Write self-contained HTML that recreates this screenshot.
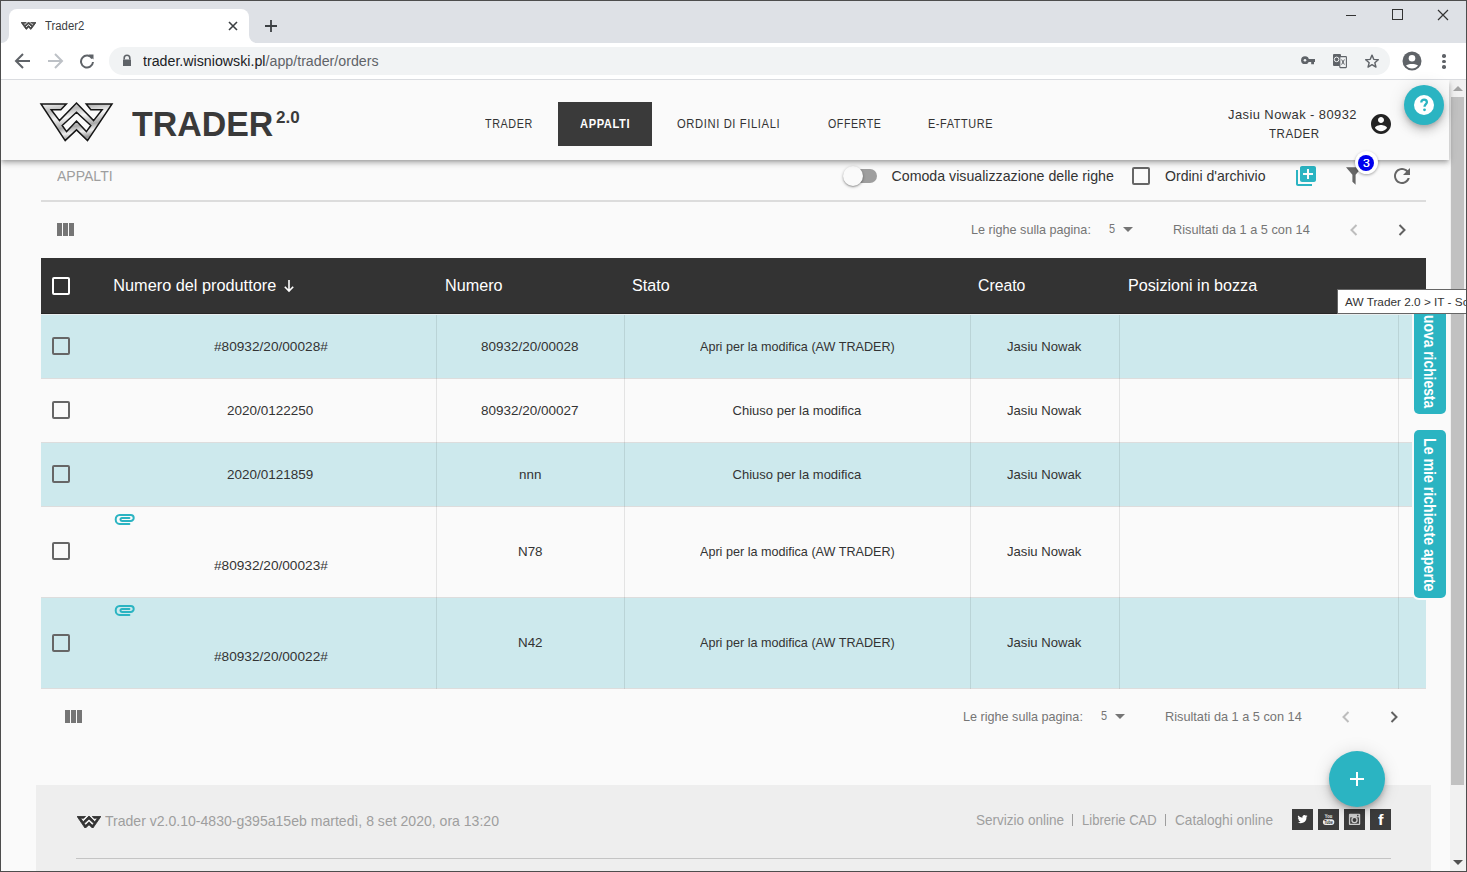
<!DOCTYPE html>
<html><head><meta charset="utf-8">
<style>
*{box-sizing:border-box;margin:0;padding:0}
html,body{width:1467px;height:872px;overflow:hidden;background:#fafafa;font-family:"Liberation Sans",sans-serif;color:#333}
.a{position:absolute}
.t{position:absolute;white-space:nowrap;line-height:1;transform-origin:0 0}
</style></head><body>
<div class="a" style="left:0px;top:0px;width:1467px;height:43px;background:#dee1e6"></div>
<div class="a" style="left:0px;top:43px;width:1467px;height:36px;background:#fff"></div>
<div class="a" style="left:0px;top:79px;width:1467px;height:1px;background:#dadce0"></div>
<div class="a" style="left:9px;top:9px;width:240px;height:35px;background:#fff;border-radius:8px 8px 0 0"></div>
<div class="a" style="left:1px;top:35px;width:8px;height:8px;background:#fff"></div>
<div class="a" style="left:1px;top:27px;width:8px;height:16px;background:#dee1e6;border-radius:0 0 8px 0"></div>
<div class="a" style="left:249px;top:35px;width:8px;height:8px;background:#fff"></div>
<div class="a" style="left:249px;top:27px;width:8px;height:16px;background:#dee1e6;border-radius:0 0 0 8px"></div>
<svg class="a" style="left:21.3px;top:22.2px" width="15.2" height="7.4" viewBox="3 5 71 37.6" preserveAspectRatio="none"><path d="M3 6L28.3 6L22.8 11.8L13.2 11.8L21.5 22.6L38.5 5L55.6 22.6L64.1 11.8L52.8 11.8L48.2 6L74 6L49.5 42.6L38.5 31.9L27.2 42.6Z M38.5 14.3L24.2 27.5L28.6 33.6L38.5 23.1L48.4 33.6L52.8 27.5Z" fill="#444" stroke="#444" stroke-width="4" fill-rule="evenodd"/></svg>
<div class="t" style="left:44.90px;top:20px;font-size:12.5px;color:#3c4043;transform:scaleX(0.9076);">Trader2</div>
<svg class="a" style="left:228px;top:21px" width="10" height="10" viewBox="0 0 10 10"><path d="M1 1L9 9M9 1L1 9" stroke="#3c4043" stroke-width="1.6"/></svg>
<svg class="a" style="left:264px;top:19px" width="14" height="14" viewBox="0 0 14 14"><path d="M7 1V13M1 7H13" stroke="#3c4043" stroke-width="1.8"/></svg>
<div class="a" style="left:1346px;top:15px;width:10px;height:1px;background:#333"></div>
<div class="a" style="left:1392px;top:9px;width:11px;height:11px;border:1px solid #333"></div>
<svg class="a" style="left:1437px;top:9px" width="12" height="12" viewBox="0 0 12 12"><path d="M1 1L11 11M11 1L1 11" stroke="#333" stroke-width="1.2"/></svg>
<svg class="a" style="left:14px;top:52px" width="18" height="18" viewBox="0 0 18 18"><path d="M16 9H3M9 2L2 9L9 16" fill="none" stroke="#5f6368" stroke-width="2"/></svg>
<svg class="a" style="left:46px;top:52px" width="18" height="18" viewBox="0 0 18 18"><path d="M2 9H15M9 2L16 9L9 16" fill="none" stroke="#bdc1c6" stroke-width="2"/></svg>
<svg class="a" style="left:79px;top:53px" width="16" height="16" viewBox="0 0 16 16"><path d="M13.2 5.5A6 6 0 1 0 14 9" fill="none" stroke="#5f6368" stroke-width="2"/><path d="M9.5 1.5H14.5V6.5Z" fill="#5f6368"/></svg>
<div class="a" style="left:109px;top:47px;width:1281px;height:28px;background:#f1f3f4;border-radius:14px"></div>
<svg class="a" style="left:121px;top:54px" width="12" height="13" viewBox="0 0 12 13"><path d="M3.2 5.5V4A2.8 2.8 0 0 1 8.8 4V5.5" fill="none" stroke="#5f6368" stroke-width="1.6"/><rect x="2" y="5.5" width="8" height="6.5" fill="#5f6368"/></svg>
<div class="t" style="left:143.40px;top:54px;font-size:14px;color:#202124;transform:scaleX(1.0160);">trader.wisniowski.pl<span style="color:#5f6368">/app/trader/orders</span></div>
<svg class="a" style="left:1300px;top:55px" width="16" height="10" viewBox="0 0 16 10"><circle cx="5" cy="5.2" r="3.9" fill="#5f6368"/><circle cx="5" cy="5.2" r="1.3" fill="#f1f3f4"/><path d="M7 4H15V6.9H14V9.2H11.2V6.9H7Z" fill="#5f6368"/></svg>
<svg class="a" style="left:1332px;top:53px" width="16" height="16" viewBox="0 0 16 16"><rect x="1" y="1" width="8" height="12" rx="1" fill="#5f6368"/><rect x="7.8" y="3.6" width="6.6" height="11" rx=".6" fill="#f1f3f4" stroke="#5f6368" stroke-width="1.1"/><circle cx="4.6" cy="6.4" r="2.3" fill="none" stroke="#f1f3f4" stroke-width="1"/><path d="M9.6 6.5L12.4 11.6M12.4 6.5L9.6 11.6" stroke="#5f6368" stroke-width="1"/></svg>
<svg class="a" style="left:1365px;top:54px" width="14" height="14" viewBox="0 0 16 16"><path d="M8 1.3L10 6.1L15.2 6.5L11.2 9.9L12.5 14.9L8 12.2L3.5 14.9L4.8 9.9L0.8 6.5L6 6.1Z" fill="none" stroke="#5f6368" stroke-width="1.6" stroke-linejoin="round"/></svg>
<svg class="a" style="left:1402px;top:51px" width="20" height="20" viewBox="0 0 20 20"><circle cx="10" cy="10" r="9.5" fill="#5f6368"/><circle cx="10" cy="7.3" r="3.3" fill="#fff"/><path d="M4 14.6C5.5 12.4 14.5 12.4 16 14.6C14.5 16.6 12.5 17.4 10 17.4C7.5 17.4 5.5 16.6 4 14.6Z" fill="#fff"/></svg>
<div class="a" style="left:1442.3px;top:54.2px;width:3.5px;height:3.5px;border-radius:50%;background:#5f6368"></div>
<div class="a" style="left:1442.3px;top:59.7px;width:3.5px;height:3.5px;border-radius:50%;background:#5f6368"></div>
<div class="a" style="left:1442.3px;top:65.2px;width:3.5px;height:3.5px;border-radius:50%;background:#5f6368"></div>
<div class="a" style="left:0;top:80px;width:1467px;height:120px;overflow:hidden;z-index:2"><div class="a" style="left:1px;top:0px;width:1448px;height:80px;background:#fafafa;box-shadow:0 2px 4px -1px rgba(0,0,0,.25),0 4px 5px 0 rgba(0,0,0,.14),0 1px 10px 0 rgba(0,0,0,.08)"></div></div>
<div class="a" style="left:0;top:0;width:1467px;height:872px;z-index:3;pointer-events:none"><svg class="a" style="left:38px;top:98px" width="78" height="48" viewBox="0 0 78 48">
<defs><linearGradient id="sg" x1="0" y1="0" x2="0.3" y2="1"><stop offset="0" stop-color="#f8f8f8"/><stop offset=".25" stop-color="#b8b8b8"/><stop offset=".45" stop-color="#f6f6f6"/><stop offset=".7" stop-color="#a8a8a8"/><stop offset=".85" stop-color="#eee"/><stop offset="1" stop-color="#999"/></linearGradient></defs>
<path d="M3 6L28.3 6L22.8 11.8L13.2 11.8L21.5 22.6L38.5 5L55.6 22.6L64.1 11.8L52.8 11.8L48.2 6L74 6L49.5 42.6L38.5 31.9L27.2 42.6Z M38.5 14.3L24.2 27.5L28.6 33.6L38.5 23.1L48.4 33.6L52.8 27.5Z" fill="url(#sg)" fill-rule="evenodd" stroke="#151515" stroke-width="1.5" stroke-linejoin="miter"/>
</svg>
<div class="t" style="left:132.20px;top:107px;font-size:35.7px;font-weight:bold;color:#3a3a3a;transform:scaleX(0.9498);">TRADER</div>
<div class="t" style="left:276.30px;top:109px;font-size:16.3px;font-weight:bold;color:#3a3a3a;transform:scaleX(1.0460);">2.0</div>
<div class="a" style="left:558px;top:102px;width:94px;height:44px;background:#3a3a3a"></div>
<div class="t" style="left:485.30px;top:117px;font-size:13px;color:#333;transform:scaleX(0.8289);letter-spacing:0.7px;">TRADER</div>
<div class="t" style="left:580.20px;top:117px;font-size:13px;font-weight:bold;color:#fff;transform:scaleX(0.8553);letter-spacing:0.7px;">APPALTI</div>
<div class="t" style="left:677.40px;top:117px;font-size:13px;color:#333;transform:scaleX(0.8634);letter-spacing:0.7px;">ORDINI DI FILIALI</div>
<div class="t" style="left:827.60px;top:117px;font-size:13px;color:#333;transform:scaleX(0.8170);letter-spacing:0.7px;">OFFERTE</div>
<div class="t" style="left:928.40px;top:117px;font-size:13px;color:#333;transform:scaleX(0.8378);letter-spacing:0.7px;">E-FATTURE</div>
<div class="t" style="left:1228.10px;top:108px;font-size:13.3px;color:#333;transform:scaleX(0.9713);letter-spacing:0.45px;">Jasiu Nowak - 80932</div>
<div class="t" style="left:1269.00px;top:127px;font-size:13px;color:#333;transform:scaleX(0.8894);letter-spacing:0.6px;">TRADER</div>
<svg class="a" style="left:1369px;top:112px" width="24" height="24" viewBox="0 0 24 24"><path fill="#222" d="M12 2C6.48 2 2 6.48 2 12s4.48 10 10 10 10-4.48 10-10S17.52 2 12 2zm0 3c1.66 0 3 1.34 3 3s-1.34 3-3 3-3-1.34-3-3 1.34-3 3-3zm0 14.2c-2.5 0-4.71-1.28-6-3.22.03-1.99 4-3.08 6-3.08 1.99 0 5.97 1.09 6 3.08-1.29 1.94-3.5 3.22-6 3.22z"/></svg></div>
<div class="a" style="left:1404px;top:85px;width:40px;height:40px;border-radius:50%;background:#2bb4c2;box-shadow:0 3px 5px -1px rgba(0,0,0,.2),0 6px 10px 0 rgba(0,0,0,.14),0 1px 18px 0 rgba(0,0,0,.12);z-index:4"></div>
<svg class="a" style="left:1412px;top:93px;z-index:5" width="24" height="24" viewBox="0 0 24 24"><circle cx="12" cy="12" r="10" fill="#fff"/><path d="M9.3 9.4C9.3 7.7 10.5 6.6 12.1 6.6S14.9 7.7 14.9 9.3C14.9 11.1 12.5 11.3 12.5 13.7" fill="none" stroke="#2bb4c2" stroke-width="2.3"/><circle cx="12.5" cy="16.8" r="1.4" fill="#2bb4c2"/></svg>
<div class="t" style="left:57.30px;top:169px;font-size:14.3px;color:#9e9e9e;transform:scaleX(0.9809);">APPALTI</div>
<div class="a" style="left:41px;top:200px;width:1385px;height:2px;background:#dcdcdc"></div>
<div class="a" style="left:849px;top:169px;width:28px;height:14px;border-radius:7px;background:#9e9e9e"></div>
<div class="a" style="left:843px;top:166px;width:20px;height:20px;border-radius:50%;background:#fafafa;box-shadow:0 1px 3px rgba(0,0,0,.35),0 1px 1px rgba(0,0,0,.14)"></div>
<div class="t" style="left:891.50px;top:169px;font-size:14.2px;color:#333;">Comoda visualizzazione delle righe</div>
<div class="a" style="left:1132px;top:167px;width:18px;height:18px;border:2px solid #666;border-radius:2px"></div>
<div class="t" style="left:1164.80px;top:169px;font-size:14.2px;color:#333;transform:scaleX(0.9925);">Ordini d'archivio</div>
<svg class="a" style="left:1294px;top:164px" width="24" height="24" viewBox="0 0 24 24"><path fill="#2bb4c2" d="M4 6H2v14c0 1.1.9 2 2 2h14v-2H4V6zm16-4H8c-1.1 0-2 .9-2 2v12c0 1.1.9 2 2 2h12c1.1 0 2-.9 2-2V4c0-1.1-.9-2-2-2zm-1 9h-4v4h-2v-4H9V9h4V5h2v4h4v2z"/></svg>
<svg class="a" style="left:1344px;top:166px" width="20" height="20" viewBox="0 0 20 20"><path fill="#666" d="M2 1.3H18L11.6 8.8V18.8L8.4 15.8V8.8Z"/></svg>
<div class="a" style="left:1354.5px;top:151px;width:23px;height:23px;border-radius:50%;background:#fff;box-shadow:0 1px 3px rgba(0,0,0,.35);z-index:3"></div>
<div class="a" style="left:1358px;top:154.5px;width:16px;height:16px;border-radius:50%;background:#0000ee;z-index:3"></div>
<div class="t" style="left:1362.50px;top:158px;font-size:11.5px;color:#fff;transform:scaleX(1.0635);z-index:4;text-shadow:0 0 .4px #fff">3</div>
<svg class="a" style="left:1390px;top:164px" width="24" height="24" viewBox="0 0 24 24"><path fill="#666" d="M17.65 6.35C16.2 4.9 14.21 4 12 4c-4.42 0-7.99 3.58-7.99 8s3.57 8 7.99 8c3.73 0 6.84-2.55 7.73-6h-2.08c-.82 2.33-3.04 4-5.65 4-3.31 0-6-2.69-6-6s2.69-6 6-6c1.66 0 3.14.69 4.22 1.78L13 11h7V4l-2.35 2.35z"/></svg>
<div class="a" style="left:57px;top:223px;width:5px;height:13px;background:#757575"></div>
<div class="a" style="left:63px;top:223px;width:5px;height:13px;background:#757575"></div>
<div class="a" style="left:69px;top:223px;width:5px;height:13px;background:#757575"></div>
<div class="t" style="left:971.40px;top:224px;font-size:12.7px;color:#757575;transform:scaleX(0.9939);">Le righe sulla pagina:</div>
<div class="t" style="left:1108.80px;top:223px;font-size:12.7px;color:#757575;transform:scaleX(0.8639);">5</div>
<div class="a" style="left:1123px;top:227px;width:0;height:0;border-left:5px solid transparent;border-right:5px solid transparent;border-top:5px solid #757575"></div>
<div class="t" style="left:1172.60px;top:224px;font-size:12.7px;color:#757575;transform:scaleX(1.0047);">Risultati da 1 a 5 con 14</div>
<svg class="a" style="left:1344px;top:220px" width="20" height="20" viewBox="0 0 20 20"><path d="M12.5 5L7.5 10L12.5 15" fill="none" stroke="#bdbdbd" stroke-width="2"/></svg>
<svg class="a" style="left:1392px;top:220px" width="20" height="20" viewBox="0 0 20 20"><path d="M7.5 5L12.5 10L7.5 15" fill="none" stroke="#616161" stroke-width="2"/></svg>
<div class="a" style="left:41px;top:258px;width:1385px;height:56px;background:#333"></div>
<div class="a" style="left:41px;top:313px;width:1385px;height:1px;background:#262626"></div>
<div class="a" style="left:41px;top:314px;width:1385px;height:1px;background:#e8eeef"></div>
<div class="a" style="left:52px;top:277px;width:18px;height:18px;border:2px solid #fff;border-radius:2px"></div>
<div class="t" style="left:113.30px;top:277px;font-size:16.3px;color:#fff;">Numero del produttore</div>
<div class="t" style="left:444.60px;top:277px;font-size:16.3px;color:#fff;transform:scaleX(0.9935);">Numero</div>
<div class="t" style="left:632.00px;top:277px;font-size:16.3px;color:#fff;transform:scaleX(0.9905);">Stato</div>
<div class="t" style="left:978.40px;top:277px;font-size:16.3px;color:#fff;transform:scaleX(0.9690);">Creato</div>
<div class="t" style="left:1127.70px;top:277px;font-size:16.3px;color:#fff;transform:scaleX(0.9909);">Posizioni in bozza</div>
<svg class="a" style="left:282px;top:279px" width="14" height="14" viewBox="0 0 14 14"><path d="M7 1V12M2.8 7.8L7 12L11.2 7.8" fill="none" stroke="#fff" stroke-width="1.6"/></svg>
<div class="a" style="left:41px;top:315px;width:1385px;height:63px;background:#cde9ed"></div>
<div class="a" style="left:41px;top:378px;width:1385px;height:1px;background:rgba(0,0,0,.115)"></div>
<div class="a" style="left:41px;top:379px;width:1385px;height:63px;background:#fafafa"></div>
<div class="a" style="left:41px;top:442px;width:1385px;height:1px;background:rgba(0,0,0,.115)"></div>
<div class="a" style="left:41px;top:443px;width:1385px;height:63px;background:#cde9ed"></div>
<div class="a" style="left:41px;top:506px;width:1385px;height:1px;background:rgba(0,0,0,.115)"></div>
<div class="a" style="left:41px;top:507px;width:1385px;height:90px;background:#fafafa"></div>
<div class="a" style="left:41px;top:597px;width:1385px;height:1px;background:rgba(0,0,0,.115)"></div>
<div class="a" style="left:41px;top:598px;width:1385px;height:90px;background:#cde9ed"></div>
<div class="a" style="left:41px;top:688px;width:1385px;height:1px;background:rgba(0,0,0,.115)"></div>
<div class="a" style="left:436px;top:315px;width:1px;height:374px;background:rgba(0,0,0,.09)"></div>
<div class="a" style="left:624px;top:315px;width:1px;height:374px;background:rgba(0,0,0,.09)"></div>
<div class="a" style="left:970px;top:315px;width:1px;height:374px;background:rgba(0,0,0,.09)"></div>
<div class="a" style="left:1119px;top:315px;width:1px;height:374px;background:rgba(0,0,0,.09)"></div>
<div class="a" style="left:1398px;top:315px;width:1px;height:374px;background:rgba(0,0,0,.09)"></div>
<div class="a" style="left:52px;top:337px;width:18px;height:18px;border:2px solid #666;border-radius:2px"></div>
<div class="t" style="left:213.60px;top:340px;font-size:13px;color:#333;transform:scaleX(1.0494);">#80932/20/00028#</div>
<div class="t" style="left:481.25px;top:340px;font-size:13px;color:#333;transform:scaleX(1.0373);">80932/20/00028</div>
<div class="t" style="left:699.65px;top:340px;font-size:13px;color:#333;transform:scaleX(0.9695);">Apri per la modifica (AW TRADER)</div>
<div class="t" style="left:1007.30px;top:340px;font-size:13px;color:#333;transform:scaleX(1.0092);">Jasiu Nowak</div>
<div class="a" style="left:52px;top:401px;width:18px;height:18px;border:2px solid #666;border-radius:2px"></div>
<div class="t" style="left:227.37px;top:404px;font-size:13px;color:#333;transform:scaleX(1.0373);">2020/0122250</div>
<div class="t" style="left:481.25px;top:404px;font-size:13px;color:#333;transform:scaleX(1.0373);">80932/20/00027</div>
<div class="t" style="left:732.60px;top:404px;font-size:13px;color:#333;">Chiuso per la modifica</div>
<div class="t" style="left:1007.30px;top:404px;font-size:13px;color:#333;transform:scaleX(1.0092);">Jasiu Nowak</div>
<div class="a" style="left:52px;top:465px;width:18px;height:18px;border:2px solid #666;border-radius:2px"></div>
<div class="t" style="left:227.37px;top:468px;font-size:13px;color:#333;transform:scaleX(1.0373);">2020/0121859</div>
<div class="t" style="left:518.83px;top:468px;font-size:13px;color:#333;transform:scaleX(1.0300);">nnn</div>
<div class="t" style="left:732.60px;top:468px;font-size:13px;color:#333;">Chiuso per la modifica</div>
<div class="t" style="left:1007.30px;top:468px;font-size:13px;color:#333;transform:scaleX(1.0092);">Jasiu Nowak</div>
<div class="a" style="left:52px;top:542px;width:18px;height:18px;border:2px solid #666;border-radius:2px"></div>
<svg class="a" style="left:108px;top:508px" width="34" height="22" viewBox="0 0 34 22"><path d="M21.4 16H11.6A3.9 4.55 0 0 1 11.6 6.9H22.7A3 3 0 0 1 22.7 12.9H13.9A1.45 1.45 0 0 1 13.9 10H21.4" fill="none" stroke="#2bb4c2" stroke-width="2" stroke-linecap="round"/></svg>
<div class="t" style="left:213.60px;top:559px;font-size:13px;color:#333;transform:scaleX(1.0494);">#80932/20/00023#</div>
<div class="t" style="left:517.72px;top:545px;font-size:13px;color:#333;transform:scaleX(1.0300);">N78</div>
<div class="t" style="left:699.65px;top:545px;font-size:13px;color:#333;transform:scaleX(0.9695);">Apri per la modifica (AW TRADER)</div>
<div class="t" style="left:1007.30px;top:545px;font-size:13px;color:#333;transform:scaleX(1.0092);">Jasiu Nowak</div>
<div class="a" style="left:52px;top:634px;width:18px;height:18px;border:2px solid #666;border-radius:2px"></div>
<svg class="a" style="left:108px;top:599px" width="34" height="22" viewBox="0 0 34 22"><path d="M21.4 16H11.6A3.9 4.55 0 0 1 11.6 6.9H22.7A3 3 0 0 1 22.7 12.9H13.9A1.45 1.45 0 0 1 13.9 10H21.4" fill="none" stroke="#2bb4c2" stroke-width="2" stroke-linecap="round"/></svg>
<div class="t" style="left:213.60px;top:650px;font-size:13px;color:#333;transform:scaleX(1.0494);">#80932/20/00022#</div>
<div class="t" style="left:517.72px;top:636px;font-size:13px;color:#333;transform:scaleX(1.0300);">N42</div>
<div class="t" style="left:699.65px;top:636px;font-size:13px;color:#333;transform:scaleX(0.9695);">Apri per la modifica (AW TRADER)</div>
<div class="t" style="left:1007.30px;top:636px;font-size:13px;color:#333;transform:scaleX(1.0092);">Jasiu Nowak</div>
<div class="a" style="left:65px;top:710px;width:5px;height:13px;background:#757575"></div>
<div class="a" style="left:71px;top:710px;width:5px;height:13px;background:#757575"></div>
<div class="a" style="left:77px;top:710px;width:5px;height:13px;background:#757575"></div>
<div class="t" style="left:963.40px;top:711px;font-size:12.7px;color:#757575;transform:scaleX(0.9939);">Le righe sulla pagina:</div>
<div class="t" style="left:1100.80px;top:710px;font-size:12.7px;color:#757575;transform:scaleX(0.8639);">5</div>
<div class="a" style="left:1115px;top:714px;width:0;height:0;border-left:5px solid transparent;border-right:5px solid transparent;border-top:5px solid #757575"></div>
<div class="t" style="left:1164.60px;top:711px;font-size:12.7px;color:#757575;transform:scaleX(1.0047);">Risultati da 1 a 5 con 14</div>
<svg class="a" style="left:1336px;top:707px" width="20" height="20" viewBox="0 0 20 20"><path d="M12.5 5L7.5 10L12.5 15" fill="none" stroke="#bdbdbd" stroke-width="2"/></svg>
<svg class="a" style="left:1384px;top:707px" width="20" height="20" viewBox="0 0 20 20"><path d="M7.5 5L12.5 10L7.5 15" fill="none" stroke="#616161" stroke-width="2"/></svg>
<div class="a" style="left:36px;top:785px;width:1395px;height:87px;background:#eee"></div>
<svg class="a" style="left:76.7px;top:815.7px" width="24" height="12.3" viewBox="3 5 71 37.6" preserveAspectRatio="none"><path d="M3 6L28.3 6L22.8 11.8L13.2 11.8L21.5 22.6L38.5 5L55.6 22.6L64.1 11.8L52.8 11.8L48.2 6L74 6L49.5 42.6L38.5 31.9L27.2 42.6Z M38.5 14.3L24.2 27.5L28.6 33.6L38.5 23.1L48.4 33.6L52.8 27.5Z" fill="#333" stroke="#333" stroke-width="2.5" fill-rule="evenodd"/></svg>
<div class="t" style="left:105.10px;top:814px;font-size:14.2px;color:#9e9e9e;transform:scaleX(0.9904);">Trader v2.0.10-4830-g395a15eb martedì, 8 set 2020, ora 13:20</div>
<div class="t" style="left:975.50px;top:813px;font-size:14.2px;color:#9e9e9e;transform:scaleX(0.9541);">Servizio online</div>
<div class="a" style="left:1072px;top:814px;width:1px;height:12px;background:#9e9e9e"></div>
<div class="t" style="left:1081.70px;top:813px;font-size:14.2px;color:#9e9e9e;transform:scaleX(0.9203);">Librerie CAD</div>
<div class="a" style="left:1165px;top:814px;width:1px;height:12px;background:#9e9e9e"></div>
<div class="t" style="left:1174.90px;top:813px;font-size:14.2px;color:#9e9e9e;transform:scaleX(0.9633);">Cataloghi online</div>
<div class="a" style="left:1292px;top:809px;width:21px;height:21px;background:#3c3c3c"></div>
<div class="a" style="left:1318px;top:809px;width:21px;height:21px;background:#3c3c3c"></div>
<div class="a" style="left:1344px;top:809px;width:21px;height:21px;background:#3c3c3c"></div>
<div class="a" style="left:1370px;top:809px;width:21px;height:21px;background:#3c3c3c"></div>
<svg class="a" style="left:1296.6px;top:814.2px" width="11" height="11" viewBox="0 0 24 24"><path fill="#fff" d="M23 4.6c-.8.4-1.7.6-2.6.7.9-.6 1.6-1.4 2-2.5-.9.5-1.9.9-2.9 1.1A4.5 4.5 0 0 0 11.8 8 12.8 12.8 0 0 1 2.5 3.3a4.5 4.5 0 0 0 1.4 6c-.7 0-1.4-.2-2-.6 0 2.2 1.5 4 3.6 4.4-.7.2-1.4.2-2 .1.6 1.8 2.2 3.1 4.2 3.1A9 9 0 0 1 1 18.2 12.8 12.8 0 0 0 20.7 7.4V6.8c.9-.6 1.7-1.4 2.3-2.2z"/></svg>
<svg class="a" style="left:1318px;top:809px" width="21" height="21" viewBox="0 0 21 21"><text x="6.8" y="9.2" font-family="Liberation Sans" font-weight="bold" font-size="5.6" fill="#eee" textLength="7.3" lengthAdjust="spacingAndGlyphs">You</text><rect x="4.9" y="10.2" width="11.4" height="5.8" rx="2.9" fill="#eee"/><text x="6.2" y="14.7" font-family="Liberation Sans" font-weight="bold" font-size="5" fill="#3c3c3c" textLength="8.8" lengthAdjust="spacingAndGlyphs">Tube</text></svg>
<svg class="a" style="left:1344px;top:809px" width="21" height="21" viewBox="0 0 21 21"><rect x="4.9" y="4.8" width="11.3" height="11.2" rx="1" fill="#cfcfcf"/><rect x="6.2" y="8.4" width="8.7" height="6.3" fill="#3c3c3c"/><circle cx="10.5" cy="11" r="2.6" fill="none" stroke="#cfcfcf" stroke-width="1.3"/><circle cx="13.8" cy="6.6" r=".8" fill="#3c3c3c"/></svg>
<div class="t" style="left:1377.70px;top:812px;font-size:15px;font-weight:bold;color:#fff;transform:scaleX(1.0945);">f</div>
<div class="a" style="left:76px;top:858px;width:1315px;height:1px;background:#c4c4c4"></div>
<div class="a" style="left:1329px;top:751px;width:56px;height:56px;border-radius:50%;background:#2bb4c2;box-shadow:0 3px 5px -1px rgba(0,0,0,.2),0 6px 10px 0 rgba(0,0,0,.14),0 1px 18px 0 rgba(0,0,0,.12)"></div>
<div class="a" style="left:1350px;top:778px;width:14px;height:2px;background:#fff"></div>
<div class="a" style="left:1356px;top:772px;width:2px;height:14px;background:#fff"></div>
<div class="a" style="left:1412px;top:300px;width:36px;height:116px;background:#fafafa;border-radius:7px"></div>
<div class="a" style="left:1414px;top:300px;width:32px;height:114px;background:#2bb4c2;border-radius:5px"></div>
<div class="t" style="left:1438.00px;top:304.52px;font-size:17px;font-weight:bold;color:#fff;transform:rotate(90deg) scaleX(0.8150)">Nuova richiesta</div>
<div class="a" style="left:1412px;top:428px;width:36px;height:172px;background:#fafafa;border-radius:7px"></div>
<div class="a" style="left:1414px;top:430px;width:32px;height:168px;background:#2bb4c2;border-radius:5px"></div>
<div class="t" style="left:1438.00px;top:438.10px;font-size:17px;font-weight:bold;color:#fff;transform:rotate(90deg) scaleX(0.8331)">Le mie richieste aperte</div>
<div class="a" style="left:1337px;top:289px;width:140px;height:25px;background:#fff;border:1px solid #666;z-index:10"></div>
<div class="t" style="left:1345.00px;top:297px;font-size:11.8px;color:#333;z-index:11">AW Trader 2.0 &gt; IT - So</div>
<div class="a" style="left:1450px;top:80px;width:16px;height:791px;background:#f1f1f1"></div>
<div class="a" style="left:1451px;top:97px;width:13px;height:688px;background:#c1c1c1"></div>
<div class="a" style="left:1453px;top:86px;width:0;height:0;border-left:5px solid transparent;border-right:5px solid transparent;border-bottom:5px solid #a3a3a3"></div>
<div class="a" style="left:1453px;top:860px;width:0;height:0;border-left:5px solid transparent;border-right:5px solid transparent;border-top:5px solid #505050"></div>
<div class="a" style="left:0px;top:0px;width:1467px;height:872px;border:1px solid #4d4d4d;pointer-events:none;z-index:20"></div>
</body></html>
